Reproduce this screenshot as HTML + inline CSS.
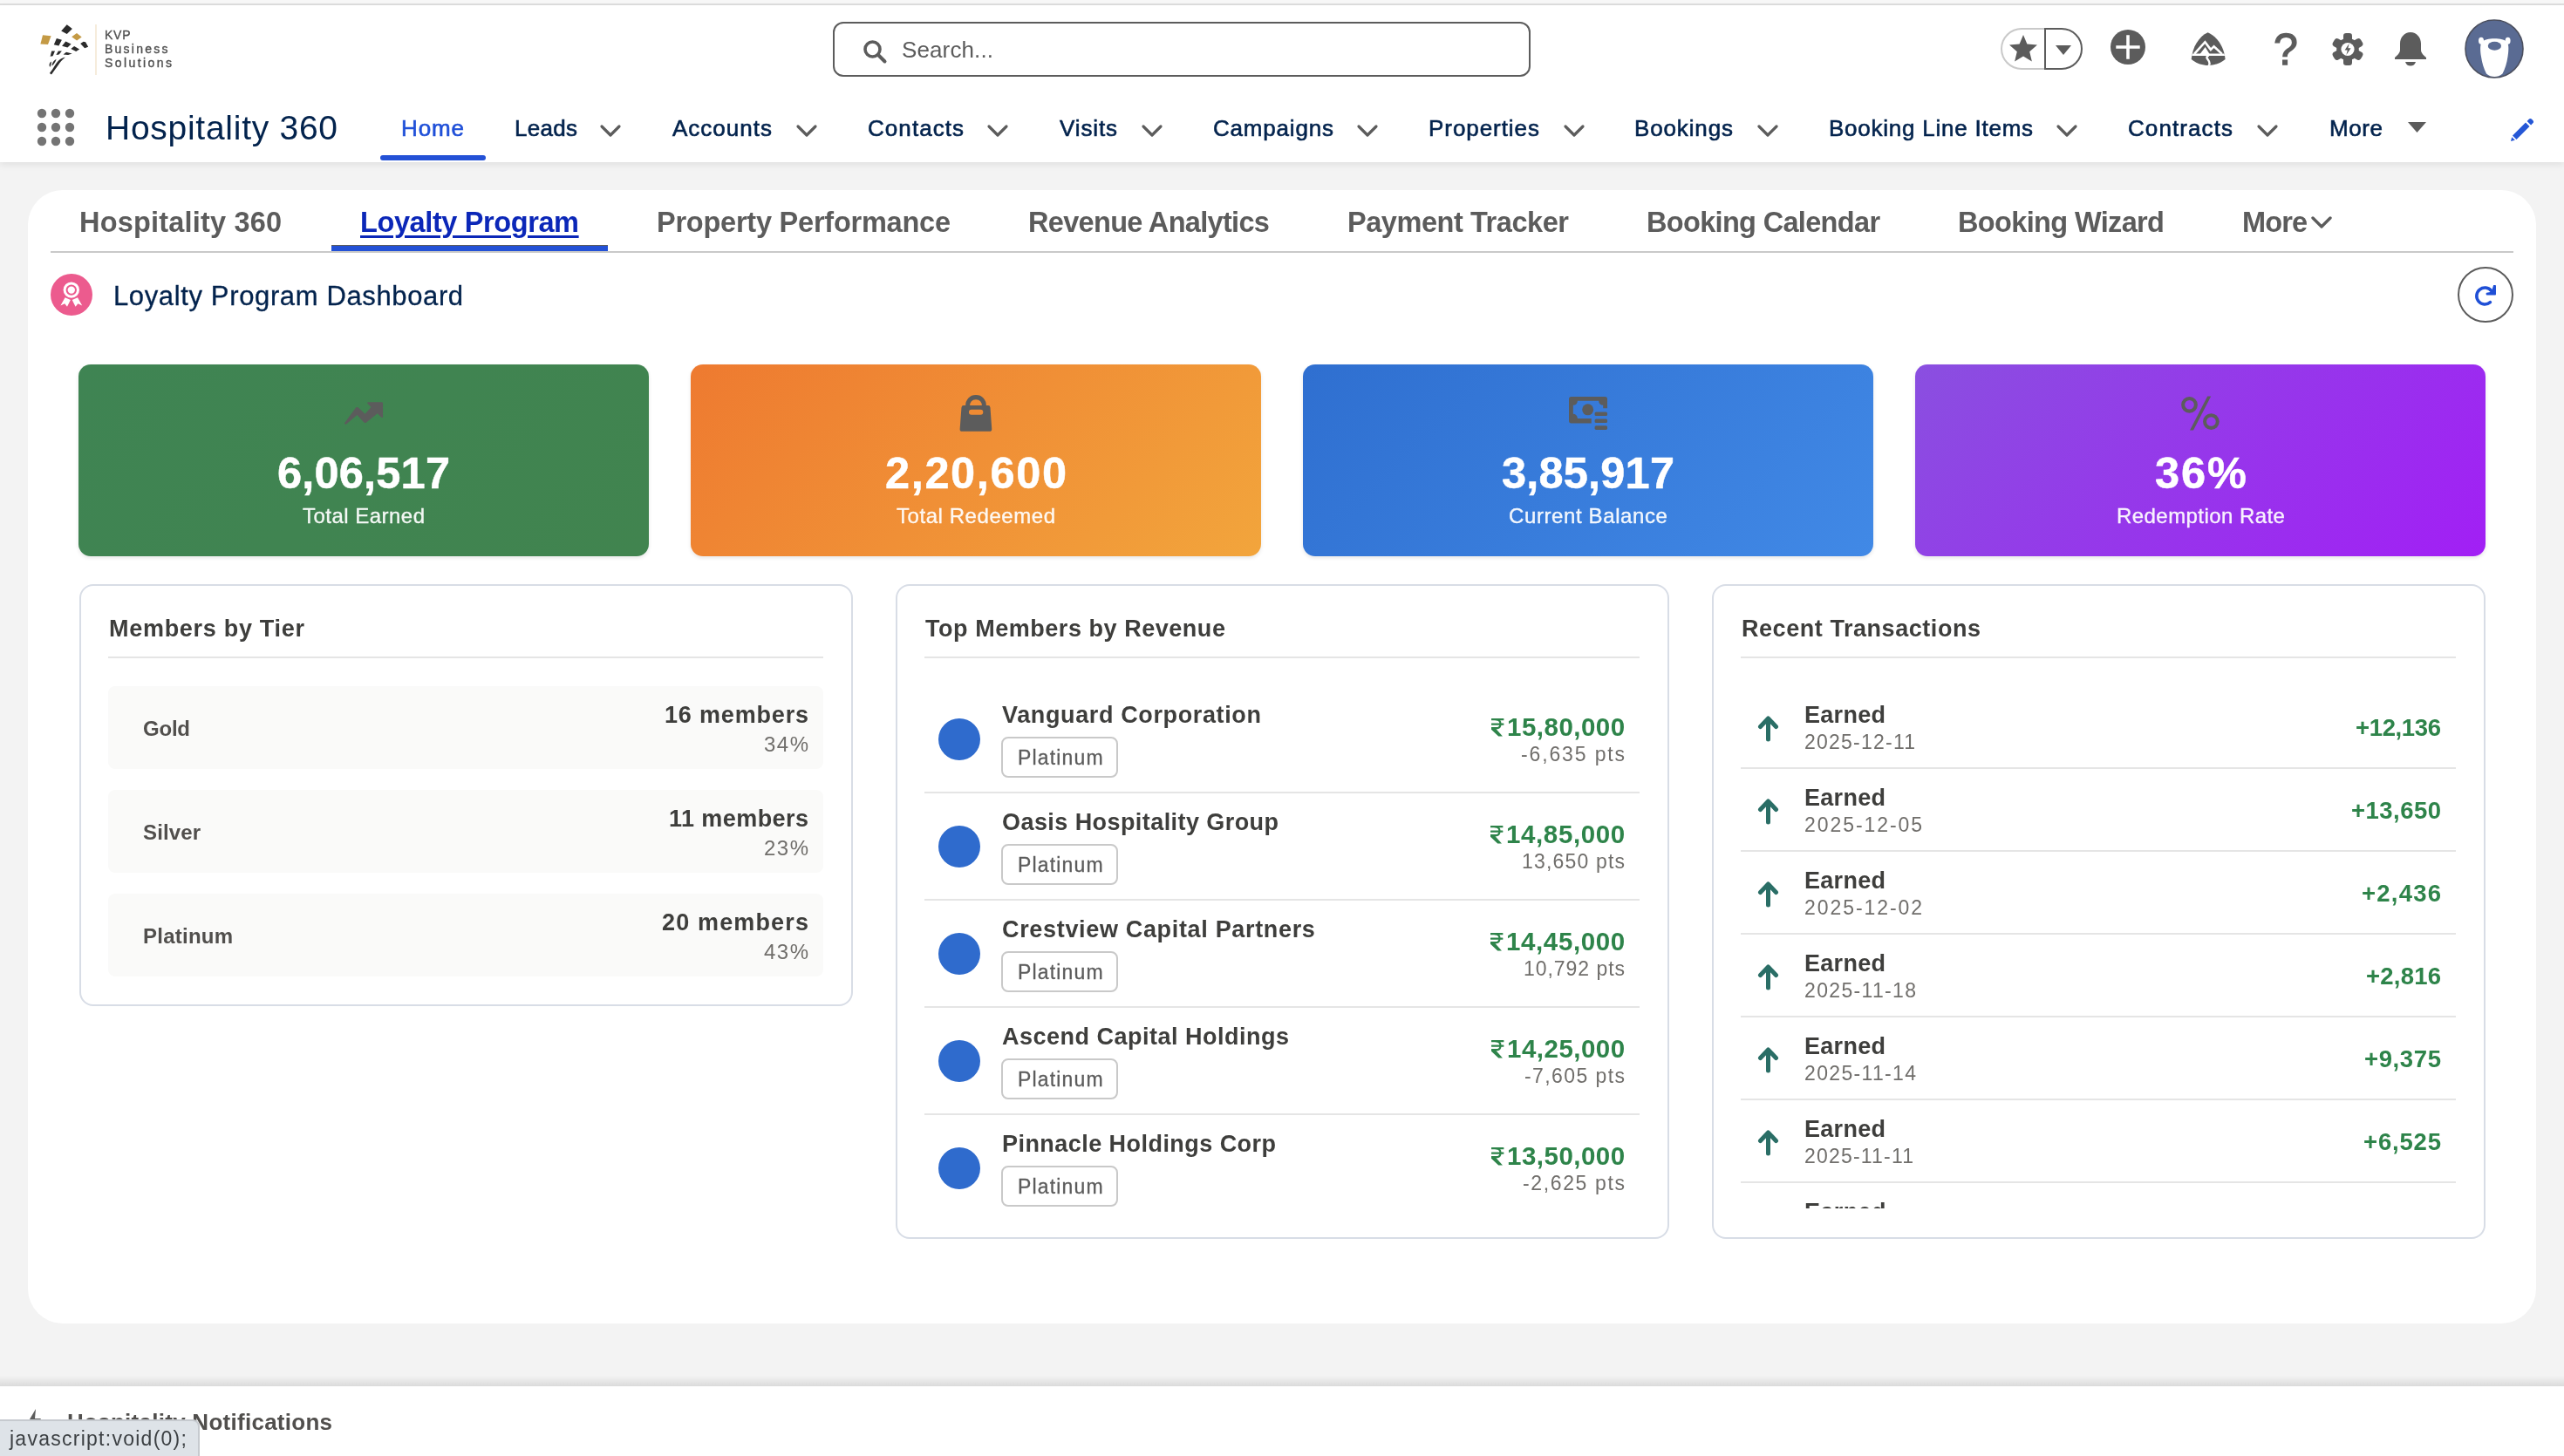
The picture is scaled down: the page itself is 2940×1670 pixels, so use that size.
<!DOCTYPE html>
<html lang="en"><head><meta charset="utf-8"><title>Hospitality 360 | Salesforce</title>
<style>
html,body{margin:0;padding:0;}
body{width:2940px;height:1670px;overflow:hidden;position:relative;background:#f3f3f3;font-family:"Liberation Sans",sans-serif;color:#181818;}
.b{position:absolute;box-sizing:border-box;}
.t{position:absolute;white-space:nowrap;display:block;will-change:transform;}
svg{position:absolute;display:block;overflow:visible;}

</style></head>
<body>
<div class="b" style="left:0px;top:0px;width:2940px;height:4px;background:#f7f7f7;"></div>
<div class="b" style="left:0px;top:4px;width:2940px;height:2px;background:#dedede;"></div>
<div class="b" style="left:0px;top:6px;width:2940px;height:180px;background:#fff;box-shadow:0 3px 8px rgba(0,0,0,0.08);"></div>
<svg style="left:0;top:0" width="120" height="100" viewBox="0 0 120 100"><g fill="#2b2b2b"><polygon points="76.7,28.2 82.9,33.0 76.7,38.9 70.2,35.6"/><polygon points="64.9,44.0 70.9,45.7 67.4,52.4 61.8,51.3"/><polygon points="75.3,47.5 81.6,50.4 77.4,54.5 71.1,52.8"/><polygon points="95.7,47.8 98.1,48.3 101.2,53.8 97.1,55.2 92.2,49.9"/><polygon points="85.1,53.1 91.1,56.5 87.2,59.1 81.3,55.9"/><polygon points="59.2,58.6 63.0,58.4 60.6,64.3 57.6,64.7"/><polygon points="66.9,58.6 70.9,58.6 67.7,62.6 64.4,62.9"/><polygon points="76.0,59.8 82.7,61.4 78.1,62.9 72.6,62.6"/><path d="M74.8 65.7 C70.0 66.1 66.2 70.0 63.5 74.2 C61.4 77.7 59.0 81.2 56.9 83.9 L59.0 85.5 C61.6 81.9 64.2 78.2 66.9 74.6 C68.4 71.9 71.1 68.7 74.8 65.7 Z"/><path d="M58.9 70.5 C56.5 71.7 55.9 74.5 57.2 77.1 C58.6 74.5 58.9 72.6 58.9 70.5 Z"/><path d="M64.6 67.8 C61.4 69.4 59.7 72.4 59.4 75.7 C62.1 73.6 63.8 70.8 64.6 67.8 Z"/></g><g fill="#c49a45"><polygon points="49.0,40.3 58.6,41.2 55.0,50.9 46.4,50.6"/><polygon points="88.0,37.9 93.7,42.6 88.1,46.6 82.2,42.2"/></g></svg>
<div class="b" style="left:108.7px;top:28px;width:2.1px;height:58px;background:#f6ecdc;"></div>
<span class="t" style="left:119.6px;top:31.3px;font-size:14px;line-height:18px;font-weight:400;color:#4f4f4f;letter-spacing:0.74px;-webkit-text-stroke:0.35px #4f4f4f;">KVP</span>
<span class="t" style="left:119.6px;top:47.3px;font-size:14px;line-height:18px;font-weight:400;color:#4f4f4f;letter-spacing:2.24px;-webkit-text-stroke:0.35px #4f4f4f;">Business</span>
<span class="t" style="left:119.6px;top:63.3px;font-size:14px;line-height:18px;font-weight:400;color:#4f4f4f;letter-spacing:2.43px;-webkit-text-stroke:0.35px #4f4f4f;">Solutions</span>
<div class="b" style="left:955px;top:24.5px;width:800px;height:63px;background:#fff;border:2px solid #5c5c5c;border-radius:12px;"></div>
<svg style="left:989px;top:45px" width="28" height="28" viewBox="0 0 28 28"><circle cx="11.5" cy="11.5" r="8.5" fill="none" stroke="#5c5c5c" stroke-width="3.6"/><path d="M18 18 L25.5 25.5" stroke="#5c5c5c" stroke-width="4" stroke-linecap="round"/></svg>
<span class="t" style="left:1034.0px;top:40.0px;font-size:26px;line-height:34px;font-weight:400;color:#5c5c5c;letter-spacing:0.12px;">Search...</span>
<div class="b" style="left:2294px;top:32px;width:52px;height:48px;border:2px solid #c9c9c9;border-right:none;border-radius:24px 0 0 24px;background:#fff;"></div>
<div class="b" style="left:2344px;top:32px;width:44px;height:48px;border:2px solid #5c5c5c;border-radius:0 24px 24px 0;background:#fff;"></div>
<svg style="left:2303px;top:39px" width="34" height="33" viewBox="0 0 34 33"><polygon fill="#5c5c5c" points="17,1 21.4,11.6 33,12.6 24.2,20.2 26.9,31.5 17,25.5 7.1,31.5 9.8,20.2 1,12.6 12.6,11.6"/></svg>
<svg style="left:2357px;top:52px" width="18" height="11" viewBox="0 0 18 11"><polygon fill="#5c5c5c" points="0,0 18,0 9,11"/></svg>
<svg style="left:2420px;top:34px" width="40" height="40" viewBox="0 0 40 40"><circle cx="20" cy="20" r="20" fill="#5c5c5c"/><path d="M20 6.3v27.4M6.3 20h27.4" stroke="#fff" stroke-width="3.6"/></svg>
<svg style="left:2511px;top:37px" width="41" height="39" viewBox="0 0 41 39"><defs><clipPath id="shc"><path d="M20.6 0.2 C31.6 5.0 39.1 16.9 40.6 30.9 C34.6 35.9 27.6 37.9 21.1 37.9 C14.6 37.9 8.1 35.9 1.7 30.9 C3.1 16.9 10.1 5.0 20.6 0.2 Z"/></clipPath></defs><path fill="#5c5c5c" d="M20.6 0.2 C31.6 5.0 39.1 16.9 40.6 30.9 C34.6 35.9 27.6 37.9 21.1 37.9 C14.6 37.9 8.1 35.9 1.7 30.9 C3.1 16.9 10.1 5.0 20.6 0.2 Z"/><g clip-path="url(#shc)"><path d="M5.1 24.9 L17.4 11.2 L23.9 19.9 L27.6 16.2 L36.8 24.9" fill="none" stroke="#fff" stroke-width="2.6" stroke-linejoin="miter"/><path d="M11.6 24.9 L17.6 16.9 L22.6 24.9 Z" fill="#fff"/><path d="M-0.1 25.7 L42.3 25.7" stroke="#fff" stroke-width="2.6"/><path d="M21.6 26.4 C14.9 29.9 26.1 32.4 21.6 38.4 C21.6 38.4 21.6 38.4 21.6 38.4" stroke="#fff" stroke-width="2.4" fill="none"/></g></svg>
<span class="t" style="left:2606.6px;top:24.5px;font-size:50px;line-height:65px;font-weight:400;color:#5c5c5c;-webkit-text-stroke:1.3px #5c5c5c;">?</span>
<svg style="left:2674px;top:38px" width="36" height="37" viewBox="0 0 36 37"><g fill="#5c5c5c"><circle cx="18" cy="18.5" r="12.8"/><rect x="13" y="0" width="10" height="10" rx="3.2" transform="rotate(0 18 18.5)"/><rect x="13" y="0" width="10" height="10" rx="3.2" transform="rotate(60 18 18.5)"/><rect x="13" y="0" width="10" height="10" rx="3.2" transform="rotate(120 18 18.5)"/><rect x="13" y="0" width="10" height="10" rx="3.2" transform="rotate(180 18 18.5)"/><rect x="13" y="0" width="10" height="10" rx="3.2" transform="rotate(240 18 18.5)"/><rect x="13" y="0" width="10" height="10" rx="3.2" transform="rotate(300 18 18.5)"/></g><circle cx="18" cy="18.5" r="7.6" fill="#fff"/><path d="M19.6 12 L14.6 19.6 H17.8 L16.4 25 L21.6 17.2 H18.4 Z" fill="#5c5c5c"/></svg>
<svg style="left:2745px;top:36px" width="38" height="40" viewBox="0 0 38 40"><path fill="#5c5c5c" d="M19 1 C26 1 31 7 31 14 V21 C31 25 34 27 37 30 V32 H1 V30 C4 27 7 25 7 21 V14 C7 7 12 1 19 1 Z"/><path fill="#5c5c5c" d="M13 35 H25 C24 38 22 39.5 19 39.5 C16 39.5 14 38 13 35 Z"/></svg>
<svg style="left:2826px;top:22px" width="68" height="68" viewBox="0 0 68 68"><circle cx="34" cy="34" r="33" fill="#5a6b93" stroke="#4b4f5e" stroke-width="1.6"/><ellipse cx="19" cy="24.8" rx="3" ry="4" fill="#fff"/><ellipse cx="49.6" cy="24.8" rx="3" ry="4" fill="#fff"/><path fill="#fff" d="M34.3 22.3 C41 22.3 46 23.5 49 26.5 C51 30 50.5 37 49.5 43 C48.5 50 46.5 57 43.5 62.5 C41 65 37.5 66 34.3 66 C31 66 27.5 65 25 62.5 C22 57 20 50 19 43 C18 37 17.5 30 19.5 26.5 C22.5 23.5 27.5 22.3 34.3 22.3 Z"/><ellipse cx="34.4" cy="30.8" rx="7.6" ry="5" fill="#5a6b93"/></svg>
<svg style="left:43px;top:125px" width="43" height="43" viewBox="0 0 43 43"><g fill="#747474"><circle cx="5" cy="5" r="5.2"/><circle cx="21" cy="5" r="5.2"/><circle cx="37" cy="5" r="5.2"/><circle cx="5" cy="21" r="5.2"/><circle cx="21" cy="21" r="5.2"/><circle cx="37" cy="21" r="5.2"/><circle cx="5" cy="37" r="5.2"/><circle cx="21" cy="37" r="5.2"/><circle cx="37" cy="37" r="5.2"/></g></svg>
<span class="t" style="left:121.0px;top:121.0px;font-size:39px;line-height:51px;font-weight:400;color:#03234d;letter-spacing:0.73px;">Hospitality 360</span>
<span class="t" style="left:460.0px;top:130.0px;font-size:26px;line-height:34px;font-weight:400;color:#2050d8;letter-spacing:0.88px;-webkit-text-stroke:0.6px #2050d8;">Home</span>
<div class="b" style="left:436px;top:178px;width:121px;height:6px;background:#2351d6;border-radius:3px;"></div>
<span class="t" style="left:590.0px;top:130.0px;font-size:26px;line-height:34px;font-weight:400;color:#03234d;letter-spacing:0.29px;-webkit-text-stroke:0.6px #03234d;">Leads</span>
<svg style="left:688px;top:142.5px" width="24" height="15" viewBox="0 0 24 15"><path d="M2 2 L12 12 L22 2" fill="none" stroke="#5c5c5c" stroke-width="3.2" stroke-linecap="round" stroke-linejoin="round"/></svg>
<span class="t" style="left:771.0px;top:130.0px;font-size:26px;line-height:34px;font-weight:400;color:#03234d;letter-spacing:1.01px;-webkit-text-stroke:0.6px #03234d;">Accounts</span>
<svg style="left:913px;top:142.5px" width="24" height="15" viewBox="0 0 24 15"><path d="M2 2 L12 12 L22 2" fill="none" stroke="#5c5c5c" stroke-width="3.2" stroke-linecap="round" stroke-linejoin="round"/></svg>
<span class="t" style="left:995.0px;top:130.0px;font-size:26px;line-height:34px;font-weight:400;color:#03234d;letter-spacing:1.06px;-webkit-text-stroke:0.6px #03234d;">Contacts</span>
<svg style="left:1132px;top:142.5px" width="24" height="15" viewBox="0 0 24 15"><path d="M2 2 L12 12 L22 2" fill="none" stroke="#5c5c5c" stroke-width="3.2" stroke-linecap="round" stroke-linejoin="round"/></svg>
<span class="t" style="left:1215.0px;top:130.0px;font-size:26px;line-height:34px;font-weight:400;color:#03234d;letter-spacing:0.87px;-webkit-text-stroke:0.6px #03234d;">Visits</span>
<svg style="left:1309px;top:142.5px" width="24" height="15" viewBox="0 0 24 15"><path d="M2 2 L12 12 L22 2" fill="none" stroke="#5c5c5c" stroke-width="3.2" stroke-linecap="round" stroke-linejoin="round"/></svg>
<span class="t" style="left:1391.0px;top:130.0px;font-size:26px;line-height:34px;font-weight:400;color:#03234d;letter-spacing:0.81px;-webkit-text-stroke:0.6px #03234d;">Campaigns</span>
<svg style="left:1556px;top:142.5px" width="24" height="15" viewBox="0 0 24 15"><path d="M2 2 L12 12 L22 2" fill="none" stroke="#5c5c5c" stroke-width="3.2" stroke-linecap="round" stroke-linejoin="round"/></svg>
<span class="t" style="left:1638.0px;top:130.0px;font-size:26px;line-height:34px;font-weight:400;color:#03234d;letter-spacing:0.94px;-webkit-text-stroke:0.6px #03234d;">Properties</span>
<svg style="left:1793px;top:142.5px" width="24" height="15" viewBox="0 0 24 15"><path d="M2 2 L12 12 L22 2" fill="none" stroke="#5c5c5c" stroke-width="3.2" stroke-linecap="round" stroke-linejoin="round"/></svg>
<span class="t" style="left:1874.0px;top:130.0px;font-size:26px;line-height:34px;font-weight:400;color:#03234d;letter-spacing:0.86px;-webkit-text-stroke:0.6px #03234d;">Bookings</span>
<svg style="left:2015px;top:142.5px" width="24" height="15" viewBox="0 0 24 15"><path d="M2 2 L12 12 L22 2" fill="none" stroke="#5c5c5c" stroke-width="3.2" stroke-linecap="round" stroke-linejoin="round"/></svg>
<span class="t" style="left:2097.0px;top:130.0px;font-size:26px;line-height:34px;font-weight:400;color:#03234d;letter-spacing:0.76px;-webkit-text-stroke:0.6px #03234d;">Booking Line Items</span>
<svg style="left:2358px;top:142.5px" width="24" height="15" viewBox="0 0 24 15"><path d="M2 2 L12 12 L22 2" fill="none" stroke="#5c5c5c" stroke-width="3.2" stroke-linecap="round" stroke-linejoin="round"/></svg>
<span class="t" style="left:2440.0px;top:130.0px;font-size:26px;line-height:34px;font-weight:400;color:#03234d;letter-spacing:1.09px;-webkit-text-stroke:0.6px #03234d;">Contracts</span>
<svg style="left:2588px;top:142.5px" width="24" height="15" viewBox="0 0 24 15"><path d="M2 2 L12 12 L22 2" fill="none" stroke="#5c5c5c" stroke-width="3.2" stroke-linecap="round" stroke-linejoin="round"/></svg>
<span class="t" style="left:2671.0px;top:130.0px;font-size:26px;line-height:34px;font-weight:400;color:#03234d;letter-spacing:0.58px;-webkit-text-stroke:0.6px #03234d;">More</span>
<svg style="left:2761px;top:140px" width="21" height="12" viewBox="0 0 21 12"><polygon fill="#5c5c5c" points="0,0 21,0 10.5,12"/></svg>
<svg style="left:2879px;top:135px" width="27" height="27" viewBox="0 0 27 27"><g fill="#2557d6"><path d="M2 20.5 L17 5.5 L21.5 10 L6.5 25 Z"/><path d="M18.6 3.9 L21 1.5 C21.8 0.7 23 0.7 23.8 1.5 L25.5 3.2 C26.3 4 26.3 5.2 25.5 6 L23.1 8.4 Z"/><path d="M1.2 22.2 L4.8 25.8 L0 27 Z"/></g></svg>
<div class="b" style="left:32px;top:218px;width:2876px;height:1300px;background:#fff;border-radius:40px;"></div>
<div class="b" style="left:58px;top:288px;width:2824px;height:2px;background:#c9c9c9;"></div>
<span class="t" style="left:91.0px;top:234.0px;font-size:32.5px;line-height:42px;font-weight:700;color:#5c5c5c;letter-spacing:0.19px;">Hospitality 360</span>
<span class="t" style="left:413.0px;top:234.0px;font-size:32.5px;line-height:42px;font-weight:700;color:#0b27b8;letter-spacing:-0.39px;text-decoration:underline;text-decoration-thickness:3px;text-underline-offset:4px;">Loyalty Program</span>
<span class="t" style="left:753.0px;top:234.0px;font-size:32.5px;line-height:42px;font-weight:700;color:#5c5c5c;letter-spacing:-0.23px;">Property Performance</span>
<span class="t" style="left:1179.0px;top:234.0px;font-size:32.5px;line-height:42px;font-weight:700;color:#5c5c5c;letter-spacing:-0.68px;">Revenue Analytics</span>
<span class="t" style="left:1545.0px;top:234.0px;font-size:32.5px;line-height:42px;font-weight:700;color:#5c5c5c;letter-spacing:-0.44px;">Payment Tracker</span>
<span class="t" style="left:1888.0px;top:234.0px;font-size:32.5px;line-height:42px;font-weight:700;color:#5c5c5c;letter-spacing:-0.67px;">Booking Calendar</span>
<span class="t" style="left:2245.0px;top:234.0px;font-size:32.5px;line-height:42px;font-weight:700;color:#5c5c5c;letter-spacing:-0.64px;">Booking Wizard</span>
<span class="t" style="left:2571.0px;top:234.0px;font-size:32.5px;line-height:42px;font-weight:700;color:#5c5c5c;letter-spacing:-0.89px;">More</span>
<div class="b" style="left:380px;top:280.5px;width:317px;height:7.5px;background:#2351d6;border-top:1.7px solid #5c5c5c;"></div>
<svg style="left:2650px;top:248px" width="24" height="15" viewBox="0 0 24 15"><path d="M2 2 L12 12 L22 2" fill="none" stroke="#5c5c5c" stroke-width="3.4" stroke-linecap="round" stroke-linejoin="round"/></svg>
<svg style="left:58px;top:314px" width="48" height="48" viewBox="0 0 48 48"><circle cx="24" cy="24" r="24" fill="#ec5b8e"/><circle cx="23.8" cy="18.6" r="9.2" fill="#fff"/><circle cx="23.8" cy="18.6" r="5.2" fill="none" stroke="#ec5b8e" stroke-width="2"/><path d="M16.6 27.2 L22.9 30 L19 37.8 L16.2 34.2 L11.4 36.4 Z M31 27.2 L24.7 30 L28.6 37.8 L31.4 34.2 L36.2 36.4 Z" fill="#fff"/></svg>
<span class="t" style="left:130.0px;top:320.0px;font-size:31px;line-height:40px;font-weight:400;color:#03234d;letter-spacing:0.63px;-webkit-text-stroke:0.3px #03234d;">Loyalty Program Dashboard</span>
<div class="b" style="left:2818px;top:306px;width:64px;height:64px;border:2px solid #5c5c5c;border-radius:50%;background:#fff;"></div>
<svg style="left:2810px;top:298px" width="80" height="80" viewBox="0 0 1456 1456"><path d="M850.5 649 A172 172 0 1 0 827 885" fill="none" stroke="#1f4fd6" stroke-width="64" stroke-linecap="round"/><path d="M895 526 H930 Q946 526 946 542 V720 Q946 736 930 736 H756 Q740 736 740 720 V700 Q740 690 752 688 L850 668 Z" fill="#1f4fd6"/></svg>
<div class="b" style="left:90px;top:418px;width:654px;height:220px;background:linear-gradient(135deg,#3f8453 0%,#41844f 100%);border-radius:14px;box-shadow:0 2px 4px rgba(0,0,0,0.10);"></div>
<span class="t" style="left:318.0px;top:510.0px;font-size:50.5px;line-height:66px;font-weight:700;color:#fff;letter-spacing:0.20px;-webkit-text-stroke:0.5px #fff;">6,06,517</span>
<span class="t" style="left:347.0px;top:576.0px;font-size:24px;line-height:31px;font-weight:400;color:rgba(255,255,255,0.93);letter-spacing:0.48px;-webkit-text-stroke:0.35px rgba(255,255,255,0.93);">Total Earned</span>
<div class="b" style="left:792px;top:418px;width:654px;height:220px;background:linear-gradient(135deg,#ee7a30 0%,#f2a53c 100%);border-radius:14px;box-shadow:0 2px 4px rgba(0,0,0,0.10);"></div>
<span class="t" style="left:1015.0px;top:510.0px;font-size:50.5px;line-height:66px;font-weight:700;color:#fff;letter-spacing:1.63px;-webkit-text-stroke:0.5px #fff;">2,20,600</span>
<span class="t" style="left:1028.0px;top:576.0px;font-size:24px;line-height:31px;font-weight:400;color:rgba(255,255,255,0.93);letter-spacing:0.56px;-webkit-text-stroke:0.35px rgba(255,255,255,0.93);">Total Redeemed</span>
<div class="b" style="left:1494px;top:418px;width:654px;height:220px;background:linear-gradient(135deg,#2f6fd0 0%,#4189e6 100%);border-radius:14px;box-shadow:0 2px 4px rgba(0,0,0,0.10);"></div>
<span class="t" style="left:1722.0px;top:510.0px;font-size:50.5px;line-height:66px;font-weight:700;color:#fff;letter-spacing:0.20px;-webkit-text-stroke:0.5px #fff;">3,85,917</span>
<span class="t" style="left:1730.0px;top:576.0px;font-size:24px;line-height:31px;font-weight:400;color:rgba(255,255,255,0.93);letter-spacing:0.61px;-webkit-text-stroke:0.35px rgba(255,255,255,0.93);">Current Balance</span>
<div class="b" style="left:2196px;top:418px;width:654px;height:220px;background:linear-gradient(135deg,#8a4fe0 0%,#a21ff5 100%);border-radius:14px;box-shadow:0 2px 4px rgba(0,0,0,0.10);"></div>
<span class="t" style="left:2470.5px;top:510.0px;font-size:50.5px;line-height:66px;font-weight:700;color:#fff;letter-spacing:1.96px;-webkit-text-stroke:0.5px #fff;">36%</span>
<span class="t" style="left:2426.5px;top:576.0px;font-size:24px;line-height:31px;font-weight:400;color:rgba(255,255,255,0.93);letter-spacing:0.44px;-webkit-text-stroke:0.35px rgba(255,255,255,0.93);">Redemption Rate</span>
<svg style="left:377px;top:440px" width="80" height="70" viewBox="0 0 1664 1456"><path fill="#5c5c5c" d="M372 945 L650 568 Q682 552 716 580 L865 725 L1010 560 L922 472 Q905 440 940 440 L1260 440 Q1290 440 1290 470 L1290 790 Q1290 826 1255 805 L1160 710 L890 930 Q860 946 835 920 L675 750 L405 978 Z"/></svg>
<svg style="left:1079px;top:440px" width="80" height="70" viewBox="0 0 1664 1456"><path d="M637 535 C637 400 720 325 832 325 C945 325 1027 400 1027 535" fill="none" stroke="#5c5c5c" stroke-width="105"/><path fill="#5c5c5c" d="M540 520 L1125 520 Q1170 520 1175 570 L1212 1080 Q1215 1140 1155 1140 L505 1140 Q445 1140 450 1080 L488 570 Q492 520 540 520 Z"/><rect x="665" y="620" width="340" height="125" rx="62" fill="#ee8a33"/></svg>
<svg style="left:1781px;top:440px" width="80" height="70" viewBox="0 0 1664 1456"><g fill="#5c5c5c"><path d="M430 312 H1235 Q1290 312 1290 367 V590 H1190 V517 A105 105 0 0 1 1085 412 H580 A105 105 0 0 1 475 517 V725 A105 105 0 0 1 580 830 H910 V945 H430 Q375 945 375 890 V367 Q375 312 430 312 Z"/><circle cx="825" cy="620" r="135"/><rect x="990" y="675" width="300" height="96" rx="32"/><rect x="990" y="840" width="300" height="96" rx="32"/><rect x="990" y="1004" width="300" height="96" rx="32"/></g></svg>
<svg style="left:2483px;top:440px" width="80" height="70" viewBox="0 0 1664 1456"><circle cx="572" cy="505" r="153" fill="none" stroke="#5c5c5c" stroke-width="84"/><circle cx="1090" cy="905" r="153" fill="none" stroke="#5c5c5c" stroke-width="84"/><polygon fill="#5c5c5c" points="1003,300 1086,300 666,1112 583,1112"/></svg>
<div class="b" style="left:91px;top:670px;width:887px;height:484px;background:#fff;border:2px solid #d8dde6;border-radius:16px;"></div>
<span class="t" style="left:125.0px;top:703.5px;font-size:27px;line-height:35px;font-weight:700;color:#3e3e3c;letter-spacing:0.71px;">Members by Tier</span>
<div class="b" style="left:124px;top:753px;width:820px;height:2px;background:#e5e5e5;"></div>
<div class="b" style="left:124px;top:787px;width:820px;height:95px;background:#fafaf9;border-radius:8px;"></div>
<span class="t" style="left:164.0px;top:819.5px;font-size:24px;line-height:31px;font-weight:700;color:#514f4d;letter-spacing:-0.22px;">Gold</span>
<span class="t" style="left:762.0px;top:802.5px;font-size:27px;line-height:35px;font-weight:700;color:#3e3e3c;letter-spacing:0.82px;">16 members</span>
<span class="t" style="left:876.0px;top:837.5px;font-size:24px;line-height:31px;font-weight:400;color:#706e6b;letter-spacing:1.48px;">34%</span>
<div class="b" style="left:124px;top:906px;width:820px;height:95px;background:#fafaf9;border-radius:8px;"></div>
<span class="t" style="left:164.0px;top:938.5px;font-size:24px;line-height:31px;font-weight:700;color:#514f4d;letter-spacing:0.12px;">Silver</span>
<span class="t" style="left:767.0px;top:921.5px;font-size:27px;line-height:35px;font-weight:700;color:#3e3e3c;letter-spacing:0.43px;">11 members</span>
<span class="t" style="left:876.0px;top:956.5px;font-size:24px;line-height:31px;font-weight:400;color:#706e6b;letter-spacing:1.48px;">23%</span>
<div class="b" style="left:124px;top:1025px;width:820px;height:95px;background:#fafaf9;border-radius:8px;"></div>
<span class="t" style="left:164.0px;top:1057.5px;font-size:24px;line-height:31px;font-weight:700;color:#514f4d;letter-spacing:0.24px;">Platinum</span>
<span class="t" style="left:759.0px;top:1040.5px;font-size:27px;line-height:35px;font-weight:700;color:#3e3e3c;letter-spacing:1.15px;">20 members</span>
<span class="t" style="left:876.0px;top:1075.5px;font-size:24px;line-height:31px;font-weight:400;color:#706e6b;letter-spacing:1.48px;">43%</span>
<div class="b" style="left:1027px;top:670px;width:887px;height:751px;background:#fff;border:2px solid #d8dde6;border-radius:16px;"></div>
<span class="t" style="left:1061.0px;top:703.5px;font-size:27px;line-height:35px;font-weight:700;color:#3e3e3c;letter-spacing:0.54px;">Top Members by Revenue</span>
<div class="b" style="left:1060px;top:753px;width:820px;height:2px;background:#e5e5e5;"></div>
<div class="b" style="left:1060px;top:908px;width:820px;height:2px;background:#e5e5e5;"></div>
<div class="b" style="left:1076px;top:824px;width:48px;height:48px;background:#2f6bcd;border-radius:50%;"></div>
<span class="t" style="left:1149.0px;top:802.5px;font-size:27px;line-height:35px;font-weight:700;color:#3e3e3c;letter-spacing:0.63px;">Vanguard Corporation</span>
<div class="b" style="left:1148.4px;top:844.5px;width:133.2px;height:47.2px;border:2px solid #c9c9c9;border-radius:8px;background:#fff;"></div>
<span class="t" style="left:1166.5px;top:853.7px;font-size:23px;line-height:30px;font-weight:400;color:#5c5c5c;letter-spacing:1.15px;-webkit-text-stroke:0.3px #5c5c5c;">Platinum</span>
<span class="t" style="left:1727.8px;top:815.0px;font-size:29.5px;line-height:38px;font-weight:700;color:#2e844a;letter-spacing:0.49px;">15,80,000</span>
<svg style="left:1710px;top:823.8px" width="14.4" height="20.4" viewBox="0 0 460 625" preserveAspectRatio="none"><g fill="#2e844a"><rect x="0" y="0" width="460" height="68" rx="10"/><rect x="0" y="172" width="460" height="62" rx="10"/><polygon points="0,345 150,345 415,625 262,625 0,392"/></g><path d="M150 34 C290 34 335 115 335 190 C335 275 285 345 180 345 L0 345" fill="none" stroke="#2e844a" stroke-width="70"/></svg>
<span class="t" style="left:1744.0px;top:850.0px;font-size:23px;line-height:30px;font-weight:400;color:#706e6b;letter-spacing:1.86px;">-6,635 pts</span>
<div class="b" style="left:1060px;top:1031px;width:820px;height:2px;background:#e5e5e5;"></div>
<div class="b" style="left:1076px;top:947px;width:48px;height:48px;background:#2f6bcd;border-radius:50%;"></div>
<span class="t" style="left:1149.0px;top:925.5px;font-size:27px;line-height:35px;font-weight:700;color:#3e3e3c;letter-spacing:0.43px;">Oasis Hospitality Group</span>
<div class="b" style="left:1148.4px;top:967.5px;width:133.2px;height:47.2px;border:2px solid #c9c9c9;border-radius:8px;background:#fff;"></div>
<span class="t" style="left:1166.5px;top:976.7px;font-size:23px;line-height:30px;font-weight:400;color:#5c5c5c;letter-spacing:1.15px;-webkit-text-stroke:0.3px #5c5c5c;">Platinum</span>
<span class="t" style="left:1726.8px;top:938.0px;font-size:29.5px;line-height:38px;font-weight:700;color:#2e844a;letter-spacing:0.62px;">14,85,000</span>
<svg style="left:1709px;top:946.8px" width="14.4" height="20.4" viewBox="0 0 460 625" preserveAspectRatio="none"><g fill="#2e844a"><rect x="0" y="0" width="460" height="68" rx="10"/><rect x="0" y="172" width="460" height="62" rx="10"/><polygon points="0,345 150,345 415,625 262,625 0,392"/></g><path d="M150 34 C290 34 335 115 335 190 C335 275 285 345 180 345 L0 345" fill="none" stroke="#2e844a" stroke-width="70"/></svg>
<span class="t" style="left:1745.0px;top:973.0px;font-size:23px;line-height:30px;font-weight:400;color:#706e6b;letter-spacing:1.18px;">13,650 pts</span>
<div class="b" style="left:1060px;top:1154px;width:820px;height:2px;background:#e5e5e5;"></div>
<div class="b" style="left:1076px;top:1070px;width:48px;height:48px;background:#2f6bcd;border-radius:50%;"></div>
<span class="t" style="left:1149.0px;top:1048.5px;font-size:27px;line-height:35px;font-weight:700;color:#3e3e3c;letter-spacing:0.67px;">Crestview Capital Partners</span>
<div class="b" style="left:1148.4px;top:1090.5px;width:133.2px;height:47.2px;border:2px solid #c9c9c9;border-radius:8px;background:#fff;"></div>
<span class="t" style="left:1166.5px;top:1099.7px;font-size:23px;line-height:30px;font-weight:400;color:#5c5c5c;letter-spacing:1.15px;-webkit-text-stroke:0.3px #5c5c5c;">Platinum</span>
<span class="t" style="left:1726.8px;top:1061.0px;font-size:29.5px;line-height:38px;font-weight:700;color:#2e844a;letter-spacing:0.62px;">14,45,000</span>
<svg style="left:1709px;top:1069.8px" width="14.4" height="20.4" viewBox="0 0 460 625" preserveAspectRatio="none"><g fill="#2e844a"><rect x="0" y="0" width="460" height="68" rx="10"/><rect x="0" y="172" width="460" height="62" rx="10"/><polygon points="0,345 150,345 415,625 262,625 0,392"/></g><path d="M150 34 C290 34 335 115 335 190 C335 275 285 345 180 345 L0 345" fill="none" stroke="#2e844a" stroke-width="70"/></svg>
<span class="t" style="left:1747.0px;top:1096.0px;font-size:23px;line-height:30px;font-weight:400;color:#706e6b;letter-spacing:0.95px;">10,792 pts</span>
<div class="b" style="left:1060px;top:1277px;width:820px;height:2px;background:#e5e5e5;"></div>
<div class="b" style="left:1076px;top:1193px;width:48px;height:48px;background:#2f6bcd;border-radius:50%;"></div>
<span class="t" style="left:1149.0px;top:1171.5px;font-size:27px;line-height:35px;font-weight:700;color:#3e3e3c;letter-spacing:0.50px;">Ascend Capital Holdings</span>
<div class="b" style="left:1148.4px;top:1213.5px;width:133.2px;height:47.2px;border:2px solid #c9c9c9;border-radius:8px;background:#fff;"></div>
<span class="t" style="left:1166.5px;top:1222.7px;font-size:23px;line-height:30px;font-weight:400;color:#5c5c5c;letter-spacing:1.15px;-webkit-text-stroke:0.3px #5c5c5c;">Platinum</span>
<span class="t" style="left:1727.8px;top:1184.0px;font-size:29.5px;line-height:38px;font-weight:700;color:#2e844a;letter-spacing:0.49px;">14,25,000</span>
<svg style="left:1710px;top:1192.8px" width="14.4" height="20.4" viewBox="0 0 460 625" preserveAspectRatio="none"><g fill="#2e844a"><rect x="0" y="0" width="460" height="68" rx="10"/><rect x="0" y="172" width="460" height="62" rx="10"/><polygon points="0,345 150,345 415,625 262,625 0,392"/></g><path d="M150 34 C290 34 335 115 335 190 C335 275 285 345 180 345 L0 345" fill="none" stroke="#2e844a" stroke-width="70"/></svg>
<span class="t" style="left:1748.0px;top:1219.0px;font-size:23px;line-height:30px;font-weight:400;color:#706e6b;letter-spacing:1.41px;">-7,605 pts</span>
<div class="b" style="left:1076px;top:1316px;width:48px;height:48px;background:#2f6bcd;border-radius:50%;"></div>
<span class="t" style="left:1149.0px;top:1294.5px;font-size:27px;line-height:35px;font-weight:700;color:#3e3e3c;letter-spacing:0.45px;">Pinnacle Holdings Corp</span>
<div class="b" style="left:1148.4px;top:1336.5px;width:133.2px;height:47.2px;border:2px solid #c9c9c9;border-radius:8px;background:#fff;"></div>
<span class="t" style="left:1166.5px;top:1345.7px;font-size:23px;line-height:30px;font-weight:400;color:#5c5c5c;letter-spacing:1.15px;-webkit-text-stroke:0.3px #5c5c5c;">Platinum</span>
<span class="t" style="left:1727.8px;top:1307.0px;font-size:29.5px;line-height:38px;font-weight:700;color:#2e844a;letter-spacing:0.49px;">13,50,000</span>
<svg style="left:1710px;top:1315.8px" width="14.4" height="20.4" viewBox="0 0 460 625" preserveAspectRatio="none"><g fill="#2e844a"><rect x="0" y="0" width="460" height="68" rx="10"/><rect x="0" y="172" width="460" height="62" rx="10"/><polygon points="0,345 150,345 415,625 262,625 0,392"/></g><path d="M150 34 C290 34 335 115 335 190 C335 275 285 345 180 345 L0 345" fill="none" stroke="#2e844a" stroke-width="70"/></svg>
<span class="t" style="left:1746.0px;top:1342.0px;font-size:23px;line-height:30px;font-weight:400;color:#706e6b;letter-spacing:1.63px;">-2,625 pts</span>
<div class="b" style="left:1963px;top:670px;width:887px;height:751px;background:#fff;border:2px solid #d8dde6;border-radius:16px;"></div>
<span class="t" style="left:1997.0px;top:703.5px;font-size:27px;line-height:35px;font-weight:700;color:#3e3e3c;letter-spacing:0.55px;">Recent Transactions</span>
<div class="b" style="left:1996px;top:753px;width:820px;height:2px;background:#e5e5e5;"></div>
<div class="b" style="left:1996px;top:880px;width:820px;height:2px;background:#e5e5e5;"></div>
<svg style="left:2016px;top:821px" width="23" height="29" viewBox="0 0 23 29"><path d="M11.5 27 V4 M2.5 12.5 L11.5 3 L20.5 12.5" fill="none" stroke="#2a6e66" stroke-width="5" stroke-linecap="round" stroke-linejoin="round"/></svg>
<span class="t" style="left:2069.0px;top:802.5px;font-size:27px;line-height:35px;font-weight:700;color:#3e3e3c;letter-spacing:0.29px;">Earned</span>
<span class="t" style="left:2069.0px;top:836.0px;font-size:23px;line-height:30px;font-weight:400;color:#706e6b;letter-spacing:1.23px;">2025-12-11</span>
<span class="t" style="left:2701.0px;top:816.7px;font-size:27.5px;line-height:36px;font-weight:700;color:#2e844a;letter-spacing:-0.36px;">+12,136</span>
<div class="b" style="left:1996px;top:975px;width:820px;height:2px;background:#e5e5e5;"></div>
<svg style="left:2016px;top:916px" width="23" height="29" viewBox="0 0 23 29"><path d="M11.5 27 V4 M2.5 12.5 L11.5 3 L20.5 12.5" fill="none" stroke="#2a6e66" stroke-width="5" stroke-linecap="round" stroke-linejoin="round"/></svg>
<span class="t" style="left:2069.0px;top:897.5px;font-size:27px;line-height:35px;font-weight:700;color:#3e3e3c;letter-spacing:0.29px;">Earned</span>
<span class="t" style="left:2069.0px;top:931.0px;font-size:23px;line-height:30px;font-weight:400;color:#706e6b;letter-spacing:1.93px;">2025-12-05</span>
<span class="t" style="left:2696.0px;top:911.7px;font-size:27.5px;line-height:36px;font-weight:700;color:#2e844a;letter-spacing:0.47px;">+13,650</span>
<div class="b" style="left:1996px;top:1070px;width:820px;height:2px;background:#e5e5e5;"></div>
<svg style="left:2016px;top:1011px" width="23" height="29" viewBox="0 0 23 29"><path d="M11.5 27 V4 M2.5 12.5 L11.5 3 L20.5 12.5" fill="none" stroke="#2a6e66" stroke-width="5" stroke-linecap="round" stroke-linejoin="round"/></svg>
<span class="t" style="left:2069.0px;top:992.5px;font-size:27px;line-height:35px;font-weight:700;color:#3e3e3c;letter-spacing:0.29px;">Earned</span>
<span class="t" style="left:2069.0px;top:1026.0px;font-size:23px;line-height:30px;font-weight:400;color:#706e6b;letter-spacing:1.93px;">2025-12-02</span>
<span class="t" style="left:2708.0px;top:1006.7px;font-size:27.5px;line-height:36px;font-weight:700;color:#2e844a;letter-spacing:1.22px;">+2,436</span>
<div class="b" style="left:1996px;top:1165px;width:820px;height:2px;background:#e5e5e5;"></div>
<svg style="left:2016px;top:1106px" width="23" height="29" viewBox="0 0 23 29"><path d="M11.5 27 V4 M2.5 12.5 L11.5 3 L20.5 12.5" fill="none" stroke="#2a6e66" stroke-width="5" stroke-linecap="round" stroke-linejoin="round"/></svg>
<span class="t" style="left:2069.0px;top:1087.5px;font-size:27px;line-height:35px;font-weight:700;color:#3e3e3c;letter-spacing:0.29px;">Earned</span>
<span class="t" style="left:2069.0px;top:1121.0px;font-size:23px;line-height:30px;font-weight:400;color:#706e6b;letter-spacing:1.34px;">2025-11-18</span>
<span class="t" style="left:2713.0px;top:1101.7px;font-size:27.5px;line-height:36px;font-weight:700;color:#2e844a;letter-spacing:0.22px;">+2,816</span>
<div class="b" style="left:1996px;top:1260px;width:820px;height:2px;background:#e5e5e5;"></div>
<svg style="left:2016px;top:1201px" width="23" height="29" viewBox="0 0 23 29"><path d="M11.5 27 V4 M2.5 12.5 L11.5 3 L20.5 12.5" fill="none" stroke="#2a6e66" stroke-width="5" stroke-linecap="round" stroke-linejoin="round"/></svg>
<span class="t" style="left:2069.0px;top:1182.5px;font-size:27px;line-height:35px;font-weight:700;color:#3e3e3c;letter-spacing:0.29px;">Earned</span>
<span class="t" style="left:2069.0px;top:1216.0px;font-size:23px;line-height:30px;font-weight:400;color:#706e6b;letter-spacing:1.34px;">2025-11-14</span>
<span class="t" style="left:2711.0px;top:1196.7px;font-size:27.5px;line-height:36px;font-weight:700;color:#2e844a;letter-spacing:0.62px;">+9,375</span>
<div class="b" style="left:1996px;top:1355px;width:820px;height:2px;background:#e5e5e5;"></div>
<svg style="left:2016px;top:1296px" width="23" height="29" viewBox="0 0 23 29"><path d="M11.5 27 V4 M2.5 12.5 L11.5 3 L20.5 12.5" fill="none" stroke="#2a6e66" stroke-width="5" stroke-linecap="round" stroke-linejoin="round"/></svg>
<span class="t" style="left:2069.0px;top:1277.5px;font-size:27px;line-height:35px;font-weight:700;color:#3e3e3c;letter-spacing:0.29px;">Earned</span>
<span class="t" style="left:2069.0px;top:1311.0px;font-size:23px;line-height:30px;font-weight:400;color:#706e6b;letter-spacing:1.19px;">2025-11-11</span>
<span class="t" style="left:2710.0px;top:1291.7px;font-size:27.5px;line-height:36px;font-weight:700;color:#2e844a;letter-spacing:0.82px;">+6,525</span>
<div class="b" style="left:1996px;top:1356px;width:820px;height:30px;overflow:hidden;"><span class="t" style="left:73px;top:16.5px;font-size:27px;line-height:35px;font-weight:700;color:#3e3e3c;letter-spacing:0.4px;">Earned</span></div>
<div class="b" style="left:0px;top:1578px;width:2940px;height:12px;background:linear-gradient(to bottom,rgba(0,0,0,0) 0%,rgba(0,0,0,0.10) 100%);"></div>
<div class="b" style="left:0px;top:1590px;width:2940px;height:80px;background:#fff;"></div>
<svg style="left:30px;top:1616px" width="18" height="30" viewBox="0 0 18 30"><path d="M11 0 L1 17 H8 L5 30 L17 11 H10 Z" fill="#5c5c5c"/></svg>
<span class="t" style="left:77.0px;top:1614.0px;font-size:26px;line-height:34px;font-weight:700;color:#514f4d;letter-spacing:0.27px;">Hospitality Notifications</span>
<div class="b" style="left:-2px;top:1628px;width:231px;height:44px;background:#dee3e8;border:2px solid #c6cacf;border-radius:0 8px 0 0;"></div>
<span class="t" style="left:11.0px;top:1635.0px;font-size:23px;line-height:30px;font-weight:400;color:#3c4043;letter-spacing:1.26px;">javascript:void(0);</span>
</body></html>
